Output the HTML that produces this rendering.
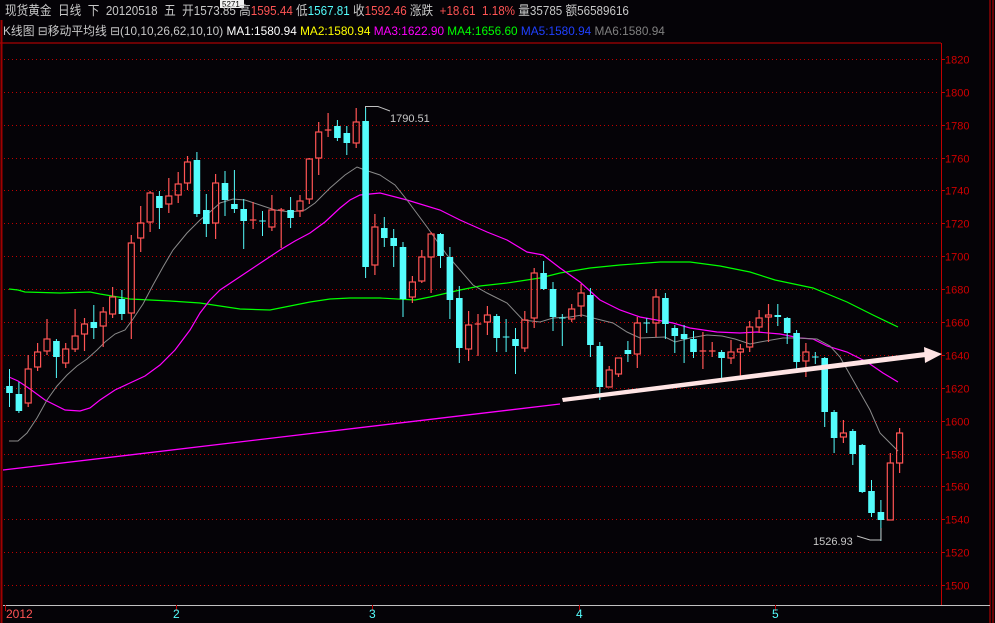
<!DOCTYPE html>
<html><head><meta charset="utf-8"><style>
html,body{margin:0;padding:0;background:#050307;}
body{width:995px;height:623px;position:relative;overflow:hidden;font-family:"Liberation Sans","Noto Sans CJK SC",sans-serif;}
.l1{position:absolute;left:5px;top:3px;font-size:13px;color:#c8c8c8;white-space:nowrap;line-height:16px;transform:scaleX(0.895);transform-origin:0 0;}
.l2{position:absolute;left:3px;top:23px;font-size:12px;color:#c8c8c8;white-space:nowrap;line-height:16px;transform:scaleX(0.985);transform-origin:0 0;}
.r{color:#ff5454}.c{color:#54fcfc}.w{color:#fff}.y{color:#ffff00}.m{color:#ff00ff}.g{color:#00ff00}.b{color:#2040ff}.gr{color:#808080}
svg{position:absolute;left:0;top:0}
</style></head><body>
<svg width="995" height="623" viewBox="0 0 995 623">
<line x1="0" y1="43" x2="941" y2="43" stroke="#d00000"/>
<line x1="1.5" y1="20" x2="1.5" y2="623" stroke="#a00000" stroke-width="2"/>
<line x1="941.5" y1="43" x2="941.5" y2="605" stroke="#c00000"/>
<line x1="990" y1="0" x2="990" y2="623" stroke="#d00000"/>
<line x1="993" y1="0" x2="993" y2="623" stroke="#d00000"/>
<line x1="3" y1="605.5" x2="990" y2="605.5" stroke="#c0c0c0"/>
<g stroke="#c00000" stroke-dasharray="1,3">
<line x1="4" y1="59.5" x2="940" y2="59.5"/><line x1="4" y1="92.5" x2="940" y2="92.5"/><line x1="4" y1="125.5" x2="940" y2="125.5"/><line x1="4" y1="158.5" x2="940" y2="158.5"/><line x1="4" y1="190.5" x2="940" y2="190.5"/><line x1="4" y1="223.5" x2="940" y2="223.5"/><line x1="4" y1="256.5" x2="940" y2="256.5"/><line x1="4" y1="289.5" x2="940" y2="289.5"/><line x1="4" y1="322.5" x2="940" y2="322.5"/><line x1="4" y1="355.5" x2="940" y2="355.5"/><line x1="4" y1="388.5" x2="940" y2="388.5"/><line x1="4" y1="421.5" x2="940" y2="421.5"/><line x1="4" y1="454.5" x2="940" y2="454.5"/><line x1="4" y1="486.5" x2="940" y2="486.5"/><line x1="4" y1="519.5" x2="940" y2="519.5"/><line x1="4" y1="552.5" x2="940" y2="552.5"/><line x1="4" y1="585.5" x2="940" y2="585.5"/>
</g>
<g stroke="#c00000"><line x1="941" y1="59.5" x2="945" y2="59.5"/><line x1="941" y1="92.5" x2="945" y2="92.5"/><line x1="941" y1="125.5" x2="945" y2="125.5"/><line x1="941" y1="158.5" x2="945" y2="158.5"/><line x1="941" y1="190.5" x2="945" y2="190.5"/><line x1="941" y1="223.5" x2="945" y2="223.5"/><line x1="941" y1="256.5" x2="945" y2="256.5"/><line x1="941" y1="289.5" x2="945" y2="289.5"/><line x1="941" y1="322.5" x2="945" y2="322.5"/><line x1="941" y1="355.5" x2="945" y2="355.5"/><line x1="941" y1="388.5" x2="945" y2="388.5"/><line x1="941" y1="421.5" x2="945" y2="421.5"/><line x1="941" y1="454.5" x2="945" y2="454.5"/><line x1="941" y1="486.5" x2="945" y2="486.5"/><line x1="941" y1="519.5" x2="945" y2="519.5"/><line x1="941" y1="552.5" x2="945" y2="552.5"/><line x1="941" y1="585.5" x2="945" y2="585.5"/>
<line x1="5.5" y1="605" x2="5.5" y2="611"/><line x1="176.5" y1="605" x2="176.5" y2="611"/><line x1="372.5" y1="605" x2="372.5" y2="611"/><line x1="579.5" y1="605" x2="579.5" y2="611"/><line x1="775.5" y1="605" x2="775.5" y2="611"/></g>
<g fill="#d00000" font-family="Liberation Sans Narrow, Liberation Sans, sans-serif" font-size="11">
<text x="945" y="63.5">1820</text><text x="945" y="96.5">1800</text><text x="945" y="129.5">1780</text><text x="945" y="162.5">1760</text><text x="945" y="194.5">1740</text><text x="945" y="227.5">1720</text><text x="945" y="260.5">1700</text><text x="945" y="293.5">1680</text><text x="945" y="326.5">1660</text><text x="945" y="359.5">1640</text><text x="945" y="392.5">1620</text><text x="945" y="425.5">1600</text><text x="945" y="458.5">1580</text><text x="945" y="490.5">1560</text><text x="945" y="523.5">1540</text><text x="945" y="556.5">1520</text><text x="945" y="589.5">1500</text>
</g>
<g font-family="Liberation Sans Narrow, Liberation Sans, sans-serif" font-size="12">
<text x="6" y="618" fill="#ff5454">2012</text><text x="173" y="618" fill="#54fcfc">2</text><text x="369" y="618" fill="#54fcfc">3</text><text x="576" y="618" fill="#54fcfc">4</text><text x="772" y="618" fill="#54fcfc">5</text>
</g>
<polyline points="3,470 560,404" fill="none" stroke="#ff00ff" stroke-width="1.3"/>
<polyline fill="none" stroke="#00ff00" stroke-width="1.2" points="9,289 18,290 25,292 60,293 90,292 100,294 130,299 170,301 200,303 240,309 270,310 285,307 310,302 330,299 350,298 380,298 415,300 430,297 460,290 480,286 507,283 540,278 560,273 590,268 620,265 660,262 690,262 720,266 750,272 775,280 813,288 847,302 873,315 898,327"/>
<polyline fill="none" stroke="#ff00ff" stroke-width="1.2" points="9,377 18,381 30,389 45,400 65,410 80,411 90,408 100,400 115,390 130,383 145,376 160,365 175,350 190,330 200,313 210,300 220,290 235,280 250,270 265,260 280,250 295,241 310,233 325,222 340,208 350,200 360,195 380,193 407,200 440,210 460,220 487,232 507,240 527,252 543,255 560,268 580,282 600,300 620,310 640,317 673,323 690,328 717,332 740,333 757,332 780,334 800,338 813,339 827,346 847,352 867,362 883,373 898,382"/>
<polyline fill="none" stroke="#8a8a8a" stroke-width="1" points="9,441 18,441 27,433 37,418 47,400 57,386 67,375 77,366 87,359 97,350 105,342 115,334 125,330 133,319 143,304 153,285 163,267 173,250 187,233 200,220 210,212 220,203 233,199 245,200 260,205 275,210 290,212 305,210 315,203 330,188 345,175 357,167 365,170 380,175 395,185 407,200 427,227 447,255 473,285 487,293 507,303 523,320 540,322 553,318 570,317 582,315 593,318 613,323 627,332 640,338 665,337 675,342 690,338 707,335 722,336 735,339 750,344 760,342 783,338 797,338 817,339 830,346 840,357 853,380 870,410 880,433 898,451"/>
<g fill="#54fcfc">
<rect x="6.2" y="386" width="6.6" height="7"/><rect x="15.6" y="394" width="6.6" height="17"/><rect x="53.1" y="341" width="6.6" height="16"/><rect x="90.5" y="322" width="6.6" height="6"/><rect x="118.6" y="299" width="6.6" height="15"/><rect x="156.1" y="196" width="6.6" height="12"/><rect x="193.6" y="160" width="6.6" height="54"/><rect x="203" y="210" width="6.6" height="14"/><rect x="221.7" y="183" width="6.6" height="17"/><rect x="231.1" y="204" width="6.6" height="5"/><rect x="240.4" y="209" width="6.6" height="12"/><rect x="287.3" y="210" width="6.6" height="8"/><rect x="334.1" y="126" width="6.6" height="12"/><rect x="343.5" y="133" width="6.6" height="10"/><rect x="362.3" y="121" width="6.6" height="146"/><rect x="381" y="228" width="6.6" height="10"/><rect x="390.4" y="238" width="6.6" height="8"/><rect x="399.7" y="247" width="6.6" height="52"/><rect x="437.2" y="234" width="6.6" height="22"/><rect x="446.6" y="257" width="6.6" height="43"/><rect x="456" y="298" width="6.6" height="50"/><rect x="493.4" y="316" width="6.6" height="22"/><rect x="512.2" y="339" width="6.6" height="7"/><rect x="540.3" y="273" width="6.6" height="16"/><rect x="549.7" y="289" width="6.6" height="28"/><rect x="587.1" y="295" width="6.6" height="50"/><rect x="596.5" y="346" width="6.6" height="41"/><rect x="624.6" y="350" width="6.6" height="4"/><rect x="662.1" y="298" width="6.6" height="26"/><rect x="671.5" y="328" width="6.6" height="8"/><rect x="680.8" y="334" width="6.6" height="5"/><rect x="690.2" y="339" width="6.6" height="13"/><rect x="718.3" y="352" width="6.6" height="6"/><rect x="774.5" y="315" width="6.6" height="2"/><rect x="783.9" y="318" width="6.6" height="15"/><rect x="793.3" y="333" width="6.6" height="29"/><rect x="821.4" y="358" width="6.6" height="54"/><rect x="830.8" y="412" width="6.6" height="26"/><rect x="849.5" y="431" width="6.6" height="23"/><rect x="858.9" y="445" width="6.6" height="47"/><rect x="868.2" y="491" width="6.6" height="22"/><rect x="877.6" y="512" width="6.6" height="8"/>
</g>
<path fill="none" stroke="#54fcfc" stroke-width="1" d="M9.5 369V407M18.9 382V413M56.4 339V378M93.8 305V339M121.9 290V320M159.4 191V229M196.9 152V217M206.3 194V237M225 171V216M234.4 170V213M243.7 199V249M262.5 211V236M290.6 197V228M337.4 120V141M346.8 126V155M365.6 108V278M384.3 217V247M393.7 229V267M403 242V317M440.5 233V268M449.9 247V319M459.3 286V363M496.7 314V352M506.1 319V352M515.5 328V374M543.6 261V290M553 282V331M562.3 314V346M590.4 288V357M599.8 342V400M627.9 341V362M646.7 318V333M665.4 293V339M674.8 325V353M684.1 325V363M693.5 331V358M721.6 350V379M777.8 304V326M787.2 317V344M796.6 330V369M815.3 352V364M824.7 357V427M834.1 410V453M852.8 429V465M862.2 444V493M871.5 480V517M880.9 500V541M259.2 221H265.8M502.8 337H509.4M559 318H565.6M643.4 323H650M812 357H818.6"/>
<g fill="none" stroke="#ff5454" stroke-width="1.2">
<rect x="25.2" y="369" width="6" height="34"/><rect x="34.6" y="352" width="6" height="15"/><rect x="44" y="339" width="6" height="12"/><rect x="62.7" y="349" width="6" height="14"/><rect x="72.1" y="336" width="6" height="13"/><rect x="81.5" y="324" width="6" height="10"/><rect x="100.2" y="312" width="6" height="14"/><rect x="109.6" y="297" width="6" height="17"/><rect x="128.3" y="243" width="6" height="70"/><rect x="137.7" y="223" width="6" height="15"/><rect x="147.1" y="193" width="6" height="29"/><rect x="165.8" y="196" width="6" height="8"/><rect x="175.2" y="184" width="6" height="11"/><rect x="184.5" y="162" width="6" height="21"/><rect x="212.6" y="183" width="6" height="40"/><rect x="268.9" y="210" width="6" height="17"/><rect x="297" y="201" width="6" height="10"/><rect x="306.3" y="159" width="6" height="40"/><rect x="315.7" y="132" width="6" height="26"/><rect x="353.2" y="122" width="6" height="21"/><rect x="371.9" y="227" width="6" height="38"/><rect x="409.4" y="282" width="6" height="15"/><rect x="418.8" y="257" width="6" height="24"/><rect x="428.1" y="234" width="6" height="23"/><rect x="465.6" y="325" width="6" height="24"/><rect x="484.4" y="315" width="6" height="7"/><rect x="521.8" y="320" width="6" height="28"/><rect x="531.2" y="273" width="6" height="45"/><rect x="568.7" y="309" width="6" height="10"/><rect x="578.1" y="293" width="6" height="13"/><rect x="606.2" y="370" width="6" height="17"/><rect x="615.5" y="358" width="6" height="16"/><rect x="634.3" y="323" width="6" height="31"/><rect x="653" y="297" width="6" height="26"/><rect x="728" y="352" width="6" height="6"/><rect x="737.4" y="349" width="6" height="3"/><rect x="746.7" y="327" width="6" height="20"/><rect x="756.1" y="318" width="6" height="9"/><rect x="765.5" y="315" width="6" height="2"/><rect x="802.9" y="352" width="6" height="9"/><rect x="840.4" y="433" width="6" height="4"/><rect x="887.3" y="463" width="6" height="57"/><rect x="896.6" y="433" width="6" height="30"/>
<path d="M28.2 355V369M28.2 403V407M37.6 343V352M37.6 367V371M47 319V339M47 351V355M65.7 343V349M65.7 363V368M75.1 309V336M75.1 349V352M84.5 318V324M84.5 334V351M103.2 307V312M103.2 326V347M112.6 287V297M112.6 314V318M131.3 235V243M131.3 313V339M140.7 206V223M140.7 238V252M150.1 191V193M150.1 222V232M168.8 178V196M168.8 204V213M178.2 172V184M178.2 195V203M187.5 156V162M187.5 183V190M215.6 174V183M215.6 223V239M271.9 195V210M271.9 227V231M300 195V201M300 211V217M309.3 158V159M309.3 199V204M318.7 122V132M318.7 158V175M356.2 108V122M356.2 143V148M374.9 214V227M374.9 265V275M412.4 276V282M412.4 297V303M421.8 250V257M421.8 281V283M431.1 232V234M431.1 257V293M468.6 311V325M468.6 349V361M487.4 306V315M487.4 322V335M524.8 311V320M524.8 348V352M534.2 268V273M534.2 318V328M571.7 304V309M571.7 319V322M581.1 284V293M581.1 306V317M609.2 366V370M618.5 374V377M637.3 317V323M637.3 354V368M656 289V297M656 323V337M731 340V352M731 358V364M740.4 344V349M740.4 352V378M749.7 321V327M749.7 347V352M759.1 310V318M759.1 327V333M768.5 304V315M768.5 317V342M805.9 343V352M805.9 361V377M843.4 420V433M843.4 437V443M890.3 453V463M899.6 428V433M899.6 463V473M253.1 202V229M249.8 220H256.4M281.2 208V248M277.9 210H284.5M328.1 113V137M324.8 130H331.4M478 314V356M474.7 324H481.3M702.9 332V369M699.6 351H706.2M712.2 342V357M708.9 351H715.5"/>
</g>
<polygon points="562,398 925,352 926,357 563,402" fill="#ffe4e4"/>
<polygon points="924,347 942,354 925,363" fill="#ffe4e4"/>
<path d="M365.5 108V106.5H378L390 111" fill="none" stroke="#c0c0c0"/>
<text x="390" y="122" fill="#c8c8c8" font-family="Liberation Sans, sans-serif" font-size="11">1790.51</text>
<path d="M857 536L870 540H881V528" fill="none" stroke="#c0c0c0"/>
<text x="813" y="545" fill="#c8c8c8" font-family="Liberation Sans, sans-serif" font-size="11">1526.93</text>
<rect x="220" y="0" width="24" height="8" fill="#f0f0f0"/>
<text x="222" y="7" font-size="8" fill="#000" font-family="Liberation Sans, sans-serif">5271</text>
</svg>
<div class="l1">现货黄金&nbsp; 日线&nbsp; 下&nbsp; 20120518&nbsp; 五&nbsp; 开1573.85 高<span class="r">1595.44</span> 低<span class="c">1567.81</span> 收<span class="r">1592.46</span> 涨跌&nbsp; <span class="r">+18.61&nbsp; 1.18%</span> 量35785 额56589616</div>
<div class="l2">K线图 ⊟移动平均线 ⊟(10,10,26,62,10,10) <span class="w">MA1:1580.94</span> <span class="y">MA2:1580.94</span> <span class="m">MA3:1622.90</span> <span class="g">MA4:1656.60</span> <span class="b">MA5:1580.94</span> <span class="gr">MA6:1580.94</span></div>
</body></html>
